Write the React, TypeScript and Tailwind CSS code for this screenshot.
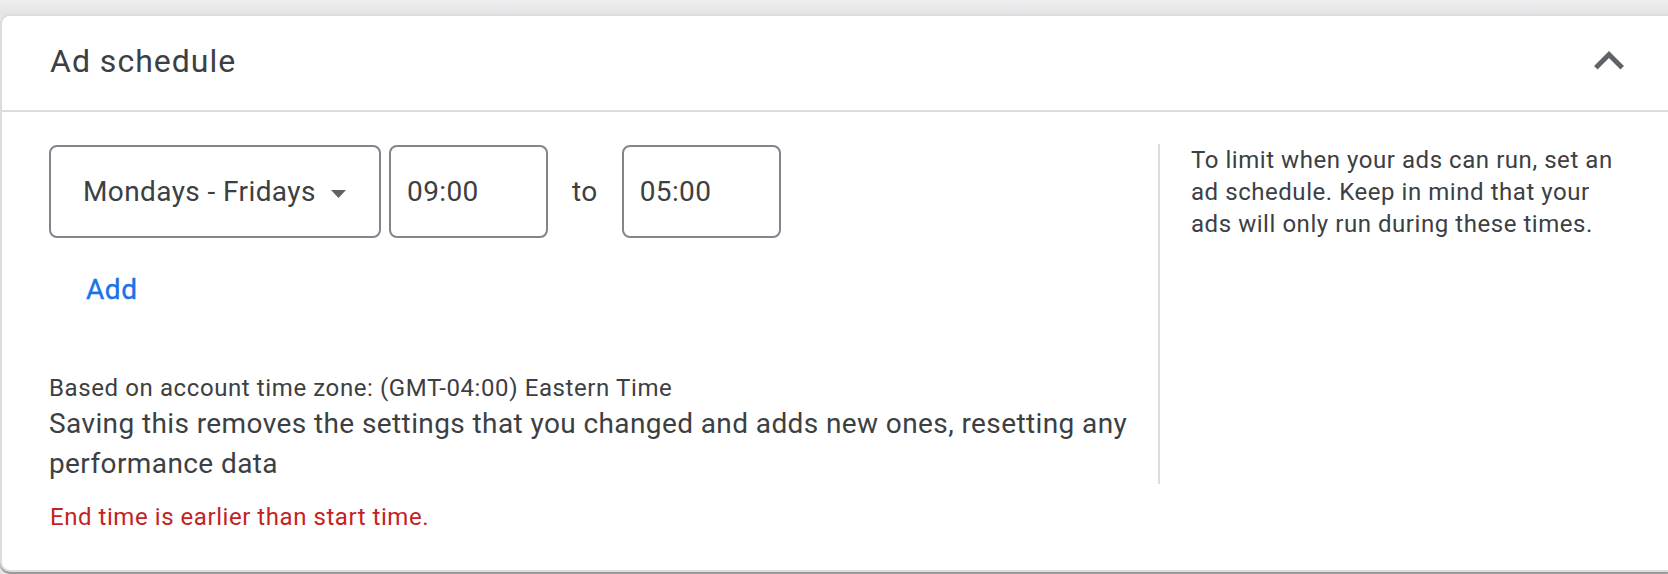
import React from "react";

const font = "font-['Roboto','Liberation_Sans',sans-serif]";

function ExpandLess() {
  return (
    <svg width="60" height="60" viewBox="0 0 24 24" className="shrink-0">
      <path d="M12 8l-6 6 1.41 1.41L12 10.83l4.59 4.58L18 14z" fill="#5f6368" />
    </svg>
  );
}

function DropTriangle() {
  return (
    <svg width="15" height="8" viewBox="0 0 15 8" className="ml-[15px] mt-[5px] shrink-0">
      <path d="M0 0h15L7.5 8z" fill="#5f6368" />
    </svg>
  );
}

function TimeBox({ value }: { value: string }) {
  return (
    <div className="w-[159px] h-[93px] border-2 border-[#80868b] rounded-[8px] flex items-center pl-[16px] text-[28px] tracking-[0.4px] text-[#3c4043]">
      {value}
    </div>
  );
}

export default function App() {
  return (
    <div className={`w-[1668px] h-[574px] overflow-hidden bg-[#e6e6e8] ${font}`}>
      <div className="h-[14px] bg-gradient-to-b from-[#efeff0] to-[#e4e4e6]" />
      <section className="h-[558px] bg-white rounded-l-[10px] border-2 border-r-0 border-[#dadce0] shadow-[0_2px_1px_rgba(0,0,0,0.35)]">
        <header className="h-[96px] flex items-center justify-between pl-[48px] pr-[29px] pb-[4px] border-b-2 border-[#dadce0]">
          <h2 className="text-[32px] tracking-[1px] text-[#3c4043]">Ad schedule</h2>
          <ExpandLess />
        </header>

        <div className="flex pl-[47px] pr-[32px] pt-[32px]">
          <div className="flex-1 pr-[24px]">
            <div className="flex items-center mt-[1px]">
              <div className="w-[332px] h-[93px] border-2 border-[#80868b] rounded-[8px] flex items-center pl-[32px] text-[28px] tracking-[0.4px] text-[#3c4043]">
                <span>Mondays - Fridays</span>
                <DropTriangle />
              </div>
              <div className="ml-[8px]">
                <TimeBox value="09:00" />
              </div>
              <span className="mx-[24px] text-[28px] tracking-[0.4px] text-[#3c4043]">to</span>
              <TimeBox value="05:00" />
            </div>

            <button className="block mt-[32px] ml-[37px] h-[40px] leading-[40px] text-[28px] font-normal tracking-[0.6px] text-[#1a73e8] [-webkit-text-stroke:0.4px_#1a73e8]">
              Add
            </button>

            <p className="mt-[62px] text-[24px] leading-[32px] tracking-[0.6px] text-[#3c4043]">
              Based on account time zone: (GMT-04:00) Eastern Time
            </p>
            <p className="text-[28px] leading-[40px] tracking-[0.4px] text-[#3c4043]">
              Saving this removes the settings that you changed and adds new ones, resetting any performance data
            </p>
          </div>

          <div className="w-[478px] border-l-2 border-[#dadce0] pl-[31px]">
            <p className="text-[24px] leading-[32px] tracking-[0.55px] text-[#3c4043]">
              To limit when your ads can run, set an ad schedule. Keep in mind that your ads will only run during
              these times.
            </p>
          </div>
        </div>

        <p className="mt-[17px] pl-[48px] text-[24px] leading-[32px] tracking-[0.55px] text-[#c5221f]">
          End time is earlier than start time.
        </p>
      </section>
    </div>
  );
}
